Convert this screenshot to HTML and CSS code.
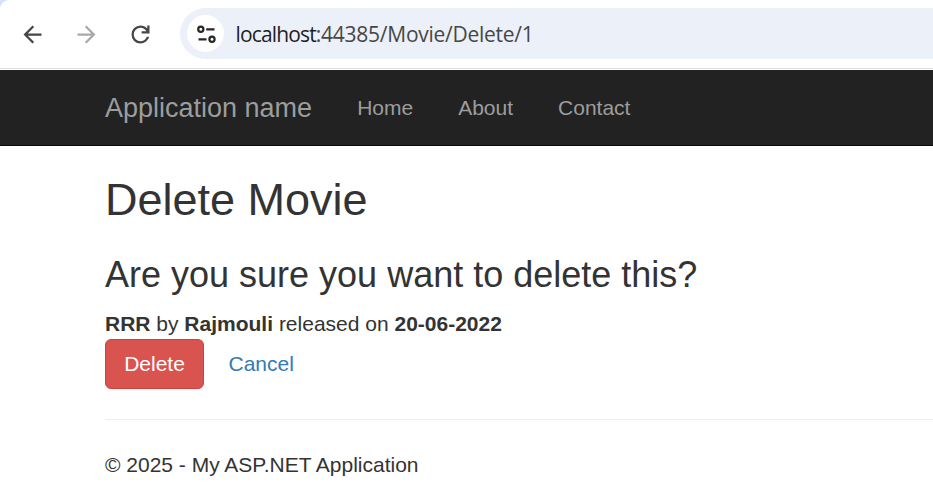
FILE: index.html
```html
<!DOCTYPE html>
<html lang="en">
<head>
<meta charset="utf-8">
<title>Delete Movie</title>
<link rel="stylesheet" href="styles.css">
</head>
<body>
<div class="frame">
<header class="toolbar">
  <svg class="nav-icon" viewBox="0 0 24 24"><path d="M20 11H7.830l5.590-5.590L12 4l-8 8 8 8 1.410-1.410L7.830 13H20z"/></svg>
  <svg class="nav-icon off" viewBox="0 0 24 24"><path d="M4 11h12.170l-5.590-5.590L12 4l8 8-8 8-1.410-1.410L16.170 13H4z"/></svg>
  <svg class="nav-icon" viewBox="0 0 24 24"><path d="M12 20q-3.350 0-5.675-2.325T4 12t2.325-5.675T12 4q1.725 0 3.300.7125T18 6.750V4h2v7h-7V9h4.200q-.8-1.400-2.1875-2.200T12 6Q9.500 6 7.750 7.750T6 12t1.750 4.250T12 18q1.925 0 3.475-1.100T17.650 14h2.100q-.7 2.650-2.850 4.325T12 20z"/></svg>
  <div class="address">
    <span class="site"><svg viewBox="0 0 24 24"><circle cx="6.800" cy="7.300" r="2.600"/><path d="M12.200 7.300H20.500M4.500 17.300H12.500"/><circle cx="18" cy="17.300" r="2.600"/></svg></span>
    <span class="url">localhost<span class="path">:44385/Movie/Delete/1</span></span>
  </div>
</header>
</div>
<nav class="navbar">
  <a class="brand">Application name</a>
  <a>Home</a><a>About</a><a>Contact</a>
</nav>
<main class="content">
  <h1>Delete Movie</h1>
  <h2>Are you sure you want to delete this?</h2>
  <p class="details"><b>RRR</b> by <b>Rajmouli</b> released on <b>20-06-2022</b></p>
  <div class="actions"><button>Delete</button><a>Cancel</a></div>
  <hr>
  <footer>© 2025 - My ASP.NET Application</footer>
</main>
</body>
</html>
```
FILE: styles.css
```css
* { box-sizing: border-box; }
body { margin: 0; height: 492px; overflow: hidden; background: #fff; color: #333; font: 21px/30px "Liberation Sans", Arial, sans-serif; }
.frame { height: 70px; padding-bottom: 1px; background: linear-gradient(#d3e1fb 12px, #fff 12px); }
.toolbar { display: flex; align-items: center; height: 69px; padding: 0 0 1px 19px; border-bottom: 1px solid #dedede; border-top-left-radius: 9px; background: #fff; }
.nav-icon { flex: none; width: 27px; height: 27px; margin: 1px 27px 0 0; fill: #464646; }
.off { fill: #a9a9a9; }
.address { display: flex; align-items: center; flex: 1; height: 51px; margin-left: -1px; padding-left: 7px; border-radius: 26px 0 0 26px; background: #ecf0f9; }
.site { display: flex; align-items: center; justify-content: center; width: 37px; height: 37px; border-radius: 50%; background: #fff; }
.site svg { width: 24px; height: 24px; fill: none; stroke: #262626; stroke-width: 2.200; }
.url { margin-left: 11.500px; color: #1f1f1f; font: 21px "Open Sans", sans-serif; letter-spacing: -0.850px; white-space: nowrap; }
.path { color: #474747; letter-spacing: -0.260px; }
.navbar { display: flex; align-items: center; height: 76px; padding-left: 105px; border-bottom: 1px solid #080808; background: #222; color: #9d9d9d; }
.navbar a { margin-right: 45px; }
.navbar .brand { font-size: 27px; }
.content { padding-left: 105px; }
h1, h2 { margin: 0; font-weight: 400; }
h1 { padding-top: 29px; font-size: 45px; line-height: 50px; }
h2 { padding-top: 30px; font-size: 36px; line-height: 40px; }
.details { margin: 14px 0 0; }
.actions { display: flex; align-items: center; }
.actions button { width: 99px; height: 50px; padding: 0; border: 1px solid #d43f3a; border-radius: 6px; background: #d9534f; color: #fff; font: inherit; }
.actions a { margin-left: 24.500px; color: #337ab7; }
hr { height: 1px; margin: 30px 0; border: 0; background: #eee; }
```
